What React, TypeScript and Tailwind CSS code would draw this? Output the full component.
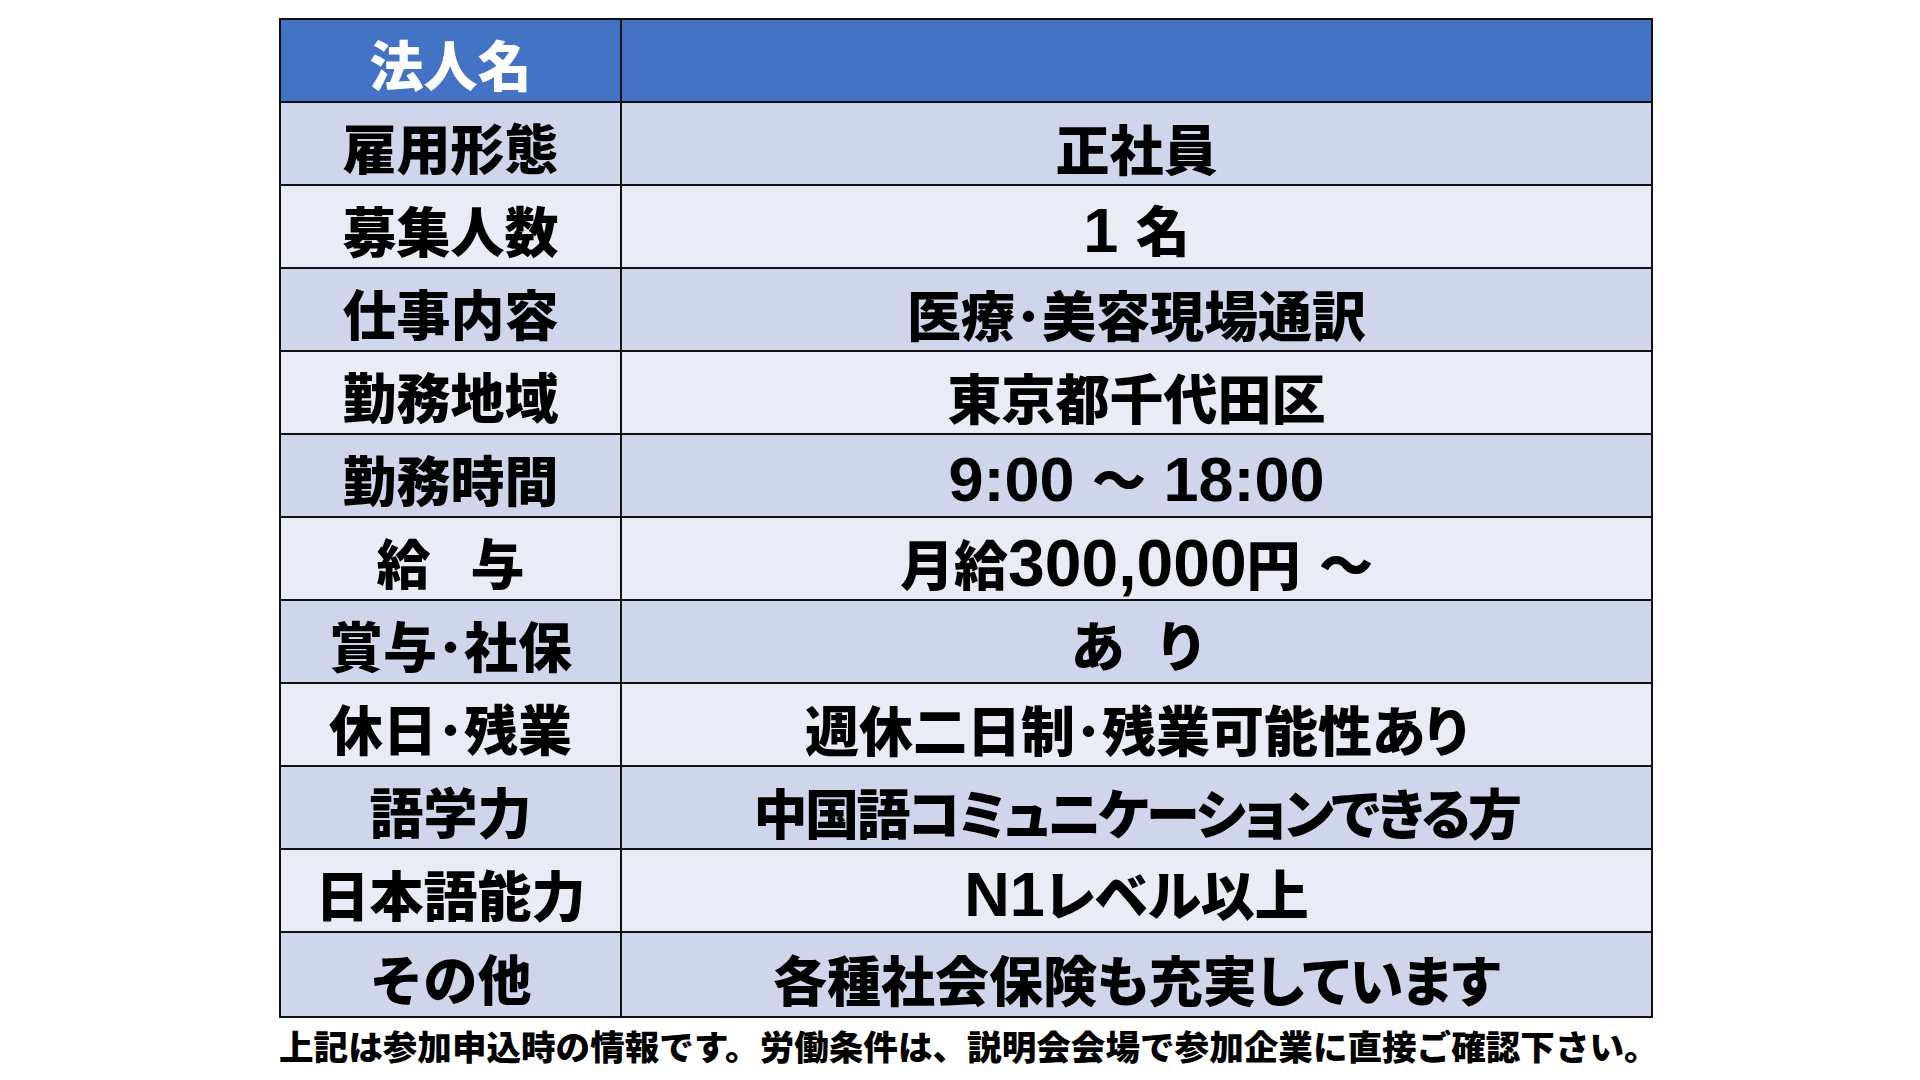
import React from "react";

function Mixed({ text, latin = "text-[63px]" }: { text: string; latin?: string }) {
  const parts = text.split(/([\x20-\x7E]+)/).filter((p) => p.length > 0);
  return (
    <span className="whitespace-pre">
      {parts.map((p, i) =>
        /^[\x20-\x7E]+$/.test(p) ? (
          <span
            key={i}
            className={"font-bold " + latin}
            style={{ fontFamily: '"Liberation Sans", Arial, sans-serif' }}
          >
            {p}
          </span>
        ) : (
          <span key={i}>{p}</span>
        )
      )}
    </span>
  );
}

type Row = { k: React.ReactNode; v: React.ReactNode; key: string };

const rows: Row[] = [
  { key: "a", k: "雇用形態", v: "正社員" },
  { key: "b", k: "募集人数", v: <Mixed text="1 名" /> },
  { key: "c", k: "仕事内容", v: "医療･美容現場通訳" },
  { key: "d", k: "勤務地域", v: "東京都千代田区" },
  { key: "e", k: "勤務時間", v: <Mixed text="9:00 ～ 18:00" /> },
  {
    key: "f",
    k: (
      <span>
        給<span className="inline-block w-[40px]" />与
      </span>
    ),
    v: <Mixed text="月給300,000円 ～" latin="text-[66px]" />,
  },
  { key: "g", k: "賞与･社保", v: <Mixed text="あ  り" /> },
  { key: "h", k: "休日･残業", v: "週休二日制･残業可能性あり" },
  {
    key: "i",
    k: "語学力",
    v: <span className="tracking-[-2.5px]">中国語コミュニケーションできる方</span>,
  },
  { key: "j", k: "日本語能力", v: <Mixed text="N1レベル以上" /> },
  { key: "k", k: "その他", v: "各種社会保険も充実しています" },
];

export default function App() {
  return (
    <div
      className="w-[1920px] h-[1080px] bg-white overflow-hidden"
      style={{ fontFamily: '"Noto Sans CJK JP", "Noto Sans", sans-serif' }}
    >
      <div className="pt-[18px] pl-[279px]">
        <div className="w-[1374px] border-2 border-[#111]">
          <div className="flex h-[83px] bg-[#4472C4] border-b-2 border-[#111]">
            <div className="w-[341px] border-r-2 border-[#111] flex items-center justify-center text-white font-black text-[54px] leading-none pt-[6px]">
              法人名
            </div>
            <div className="flex-1" />
          </div>
          {rows.map((r, i) => (
            <div
              key={r.key}
              className={
                "flex h-[83px] " +
                (i < rows.length - 1 ? "border-b-2 border-[#111] " : "") +
                (i % 2 === 0 ? "bg-[#CFD5EA]" : "bg-[#E9EBF5]")
              }
            >
              <div className="w-[341px] border-r-2 border-[#111] flex items-center justify-center text-black font-black text-[54px] leading-none pt-[6px] whitespace-pre">
                {r.k}
              </div>
              <div className="flex-1 flex items-center justify-center text-black font-black text-[54px] leading-none pt-[8px] whitespace-pre [font-feature-settings:'palt']">
                {r.v}
              </div>
            </div>
          ))}
        </div>
        <div className="mt-[6px] text-black font-black text-[34.6px] leading-[42px] whitespace-nowrap">
          上記は参加申込時の情報です。労働条件は、説明会会場で参加企業に直接ご確認下さい。
        </div>
      </div>
    </div>
  );
}
